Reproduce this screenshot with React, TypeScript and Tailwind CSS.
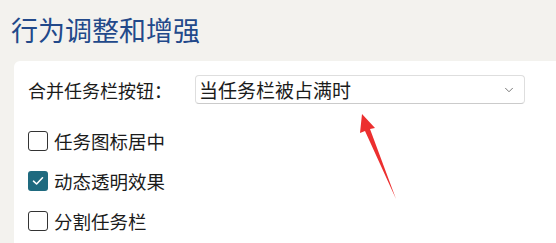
import { ChevronDown } from 'lucide-react'

const font = { fontFamily: '"Noto Sans CJK SC", "Noto Sans", sans-serif' }

function Checkbox({ checked, label }: { checked?: boolean; label: string }) {
  return (
    <div className="flex h-[40px] items-center gap-[6px]">
      {checked ? (
        <span className="flex h-[20px] w-[20px] items-center justify-center rounded-[3px] bg-[#1f6a7f]">
          <svg width="14" height="14" viewBox="0 0 14 14" fill="none">
            <path d="M2.5 7.2 L5.6 10 L11.5 3.8" stroke="white" strokeWidth="1.6" strokeLinecap="round" strokeLinejoin="round" />
          </svg>
        </span>
      ) : (
        <span className="h-[20px] w-[20px] rounded-[3px] border-[1.5px] border-[#333] bg-white" />
      )}
      <span className="text-[18.5px] leading-none text-[#1b1b1b]">{label}</span>
    </div>
  )
}

export default function App() {
  return (
    <div className="relative h-[243px] w-full overflow-hidden bg-[#f3f2ee]" style={font}>
      <h1 className="pl-[11px] pt-[12px] text-[27px] leading-[36px] text-[#22498a]">
        行为调整和增强
      </h1>
      <div className="ml-[14px] mt-[13px] h-[200px] rounded-tl-[6px] bg-white pl-[14px] pt-[14px]">
        <div className="flex items-center">
          <span className="w-[167px] text-[18px] leading-none text-[#1b1b1b]">合并任务栏按钮：</span>
          <div className="flex h-[29px] w-[330px] items-center justify-between rounded-[4px] border border-[#dedede] border-b-[#cbcbcb] bg-white pl-[3px] pr-[8px]">
            <span className="text-[19px] leading-none text-[#1b1b1b]">当任务栏被占满时</span>
            <ChevronDown size={14} strokeWidth={1.5} className="text-[#666]" />
          </div>
        </div>
        <div className="mt-[17px] flex flex-col">
          <Checkbox label="任务图标居中" />
          <Checkbox checked label="动态透明效果" />
          <Checkbox label="分割任务栏" />
        </div>
      </div>
      <svg className="absolute left-0 top-0" width="556" height="243" viewBox="0 0 556 243">
        <polygon points="362,114 375,128 370,129 396,199 365,131 360,133" fill="#ec2f2f" />
      </svg>
    </div>
  )
}
